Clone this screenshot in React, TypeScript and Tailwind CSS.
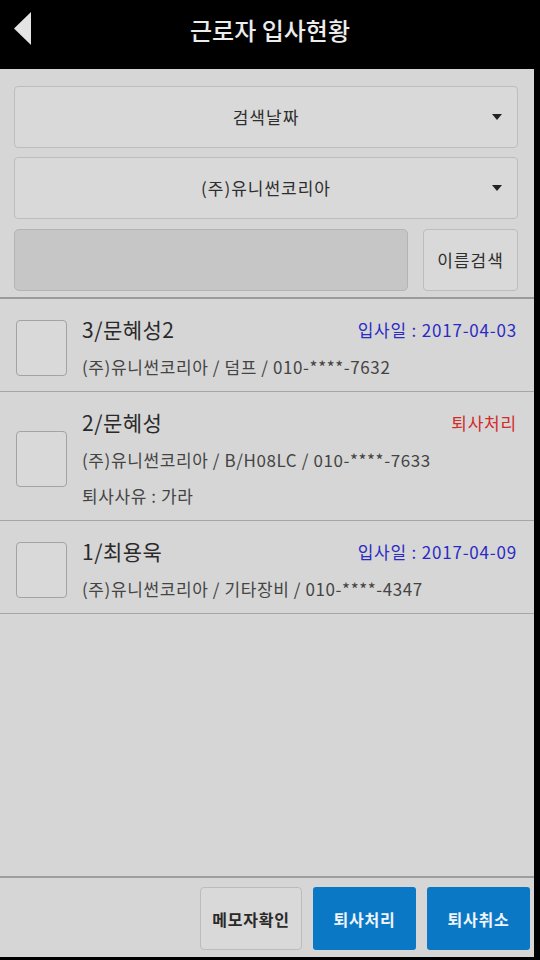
const font = { fontFamily: '"Noto Sans CJK KR", "Noto Sans", sans-serif' };

type Row = {
  name: string;
  right: string;
  rightColor: string;
  lines: string[];
};

const rows: Row[] = [
  {
    name: "3/문혜성2",
    right: "입사일 : 2017-04-03",
    rightColor: "text-[#2b2bc4]",
    lines: ["(주)유니썬코리아 / 덤프 / 010-****-7632"],
  },
  {
    name: "2/문혜성",
    right: "퇴사처리",
    rightColor: "text-[#d42a2a]",
    lines: ["(주)유니썬코리아 / B/H08LC / 010-****-7633", "퇴사사유 : 가라"],
  },
  {
    name: "1/최용욱",
    right: "입사일 : 2017-04-09",
    rightColor: "text-[#2b2bc4]",
    lines: ["(주)유니썬코리아 / 기타장비 / 010-****-4347"],
  },
];

function Select({ label }: { label: string }) {
  return (
    <div className="relative h-[62px] rounded-[4px] border border-[#bdbdbd] bg-[#d9d9d9] flex items-center justify-center">
      <span className="text-[17px] tracking-[1px] text-[#2e2e2e]">{label}</span>
      <svg className="absolute right-[15px] top-1/2 -translate-y-1/2" width="10" height="6" viewBox="0 0 10 6">
        <path d="M0 0h10L5 6z" fill="#222" />
      </svg>
    </div>
  );
}

export default function App() {
  return (
    <div className="w-[540px] h-[960px] bg-black flex flex-col" style={font}>
      {/* header */}
      <div className="h-[69px] shrink-0 relative flex items-center justify-center">
        <svg className="absolute left-[14px] top-[12px]" width="17" height="33" viewBox="0 0 17 33">
          <path d="M17 0v33L0 16.5z" fill="#e4e4e4" />
        </svg>
        <span className="text-[24px] text-[#ececec] font-medium -mt-[10px]">근로자 입사현황</span>
      </div>

      <div className="flex-1 mr-[6px] mb-[3px] bg-[#d6d6d6] flex flex-col">
        {/* filters */}
        <div className="px-[14px] pr-[16px] pt-[17px] pb-[6px] flex flex-col gap-[9px] border-b-2 border-[#9a9a9a]">
          <Select label="검색날짜" />
          <Select label="(주)유니썬코리아" />
          <div className="flex gap-[15px] mt-[1px]">
            <div className="flex-1 h-[62px] rounded-[5px] border border-[#b3b3b3] bg-[#c6c6c6]" />
            <button className="w-[95px] h-[62px] rounded-[4px] border border-[#bdbdbd] bg-[#d9d9d9] text-[17px] tracking-[1px] text-[#2e2e2e]">
              이름검색
            </button>
          </div>
        </div>

        {/* list */}
        <div className="flex flex-col">
          {rows.map((r) => (
            <div key={r.name} className="flex items-center border-b border-[#a6a6a6] pl-[16px] pr-[17px] pt-[12px] pb-[6px]">
              <div className="w-[51px] h-[56px] shrink-0 rounded-[4px] border border-[#a3a3a3] bg-[#d9d9d9]" />
              <div className="flex-1 ml-[15px] flex flex-col">
                <div className="flex items-center justify-between h-[38px]">
                  <span className="text-[21px] tracking-[0.5px] text-[#2a2a2a]">{r.name}</span>
                  <span className={`text-[17px] tracking-[0.8px] ${r.rightColor}`}>{r.right}</span>
                </div>
                {r.lines.map((l) => (
                  <div key={l} className="h-[36px] flex items-center text-[17px] tracking-[0.6px] text-[#444]">
                    {l}
                  </div>
                ))}
              </div>
            </div>
          ))}
        </div>

        <div className="flex-1" />

        {/* footer */}
        <div className="border-t-2 border-[#9e9e9e] h-[81px] flex items-start justify-end gap-[11px] pr-[4px] pt-[9px]">
          <button className="w-[102px] h-[63px] rounded-[4px] border border-[#bcbcbc] bg-[#d9d9d9] text-[16px] tracking-[0.8px] font-bold text-[#2a2a2a]">
            메모자확인
          </button>
          <button className="w-[103px] h-[63px] rounded-[3px] bg-[#0b78c6] text-[16px] tracking-[0.8px] font-bold text-[#eef4fa]">
            퇴사처리
          </button>
          <button className="w-[103px] h-[63px] rounded-[3px] bg-[#0b78c6] text-[16px] tracking-[0.8px] font-bold text-[#eef4fa]">
            퇴사취소
          </button>
        </div>
      </div>
    </div>
  );
}
